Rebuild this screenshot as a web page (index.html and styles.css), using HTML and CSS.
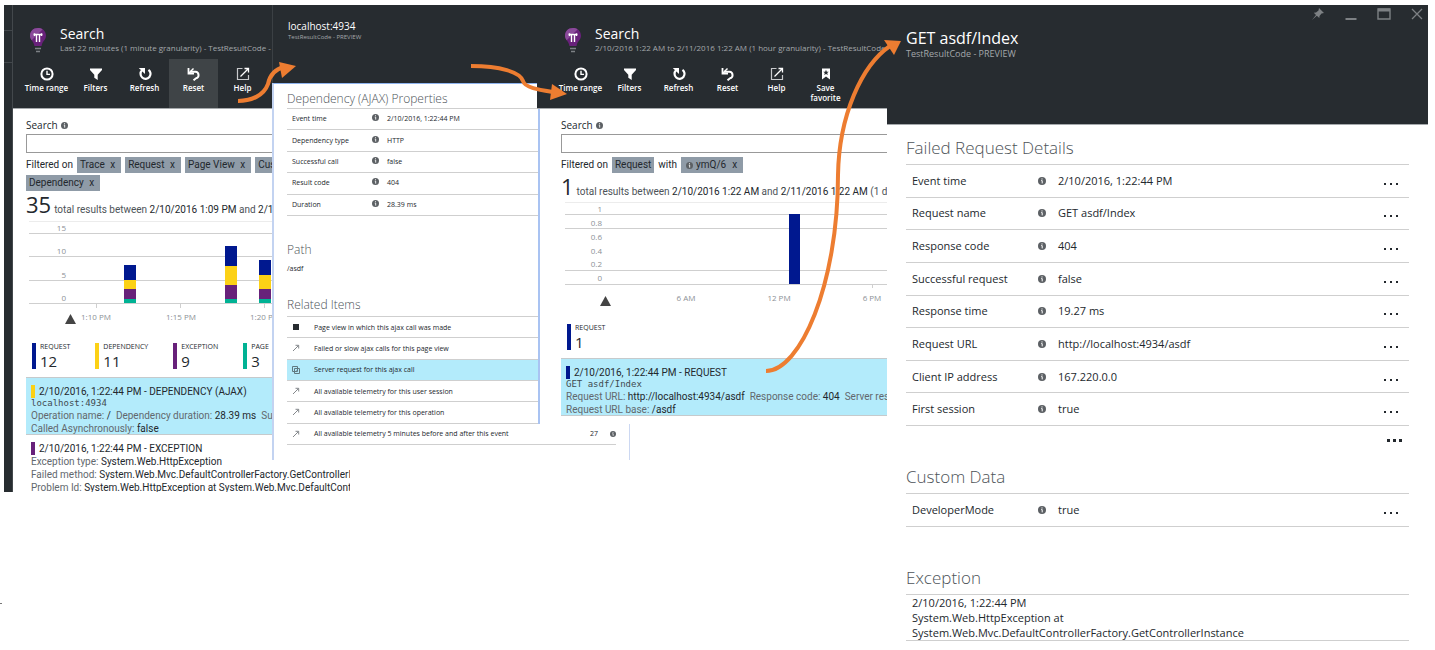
FILE: index.html
```html
<!DOCTYPE html>
<html lang="en">
<head>
<meta charset="utf-8">
<title>Application Insights - Search</title>
<link rel="stylesheet" href="styles.css">
</head>
<body>
<svg class="defs" width="0" height="0" aria-hidden="true">
  <symbol id="info" viewBox="0 0 8 8"><circle cx="4" cy="4" r="4" fill="#5c6064"/><path d="M4 1.4v1.1M3.2 3.6H4.2V6.4" stroke="#fff" stroke-width="1" fill="none"/></symbol>
  <symbol id="bulb" viewBox="0 0 18 28"><path d="M9 1C4 1 1 4.400 1 8.800C1 13 5 14.500 5.400 19H12.600C13 14.500 17 13 17 8.800C17 4.400 14 1 9 1Z" fill="#68217a"/><path d="M9 1C4 1 1 4.400 1 8.800C1 10.600 1.800 12 2.700 13.200L13.500 2.400C12.300 1.500 10.800 1 9 1Z" fill="#8a4a9a"/><path d="M4.500 7.500H13.500M7.500 7.500V15M10.500 7.500V15M5.500 6.300V9M12.500 6.300V9" stroke="#fff" stroke-width="1.400" fill="none"/><path d="M6 21.500H12M7 24.500H11" stroke="#7d8185" stroke-width="1.400"/></symbol>
  <symbol id="clock" viewBox="0 0 14 14"><circle cx="7" cy="7" r="5.600" fill="none" stroke="#fff" stroke-width="2"/><path d="M7 3.800V7.400H10" fill="none" stroke="#fff" stroke-width="1.400"/></symbol>
  <symbol id="filter" viewBox="0 0 14 14"><path d="M1 1.500H13V3L8.700 7.800V13L5.300 10.800V7.800L1 3Z" fill="#fff"/></symbol>
  <symbol id="refresh" viewBox="0 0 14 14"><path d="M10.500 2.800A5 5 0 1 1 4 3.300" fill="none" stroke="#fff" stroke-width="2.200"/><path d="M.8 1H7V7Z" fill="#fff"/></symbol>
  <symbol id="reset" viewBox="0 0 14 14"><path d="M3 4.800H8.500A3.300 3.300 0 0 1 9 11.300L6.500 13.300" fill="none" stroke="#fff" stroke-width="2"/><path d="M1.500 1V6.500H7" fill="none" stroke="#fff" stroke-width="1.800"/><path d="M2 6L6.500 1.500" stroke="#fff" stroke-width="1.400"/></symbol>
  <symbol id="help" viewBox="0 0 14 14"><path d="M6.500 1.500H1.500V12.500H12.500V8" fill="none" stroke="#c8cacc" stroke-width="1.200"/><path d="M4.500 9.500L12 2M8.500 1.500H12.500V5.500" fill="none" stroke="#fff" stroke-width="1.300"/></symbol>
  <symbol id="favorite" viewBox="0 0 14 14"><path d="M3 1.500H11V12.500L7 9.500L3 12.500Z" fill="#fff"/><path d="M7 2.800L7.800 4.700L9.800 4.800L8.200 6L8.800 8L7 6.900L5.200 8L5.800 6L4.200 4.800L6.200 4.700Z" fill="#272c30"/></symbol>
  <symbol id="out" viewBox="0 0 8 8"><path d="M1 7L6.500 1.500M3.500 1.300H6.700V4.500" fill="none" stroke="#84888c" stroke-width="1"/></symbol>
  <symbol id="square" viewBox="0 0 8 8"><rect x="1" y="1" width="6" height="6" fill="#272c30"/></symbol>
  <symbol id="copies" viewBox="0 0 8 8"><path d="M.5 .5H5.500V5.500H.5ZM2.500 2.500H7.500V7.500H2.500ZM4.500 4.500H5.500" fill="none" stroke="#5f7880" stroke-width="1"/></symbol>
</svg>

<main class="board">

  <section class="blade blade-results" aria-label="Search results">
    <div class="rail"><span class="rail-slot"></span><span class="rail-slot rail-mid"></span></div>
    <div class="pane">
      <header class="head">
        <div class="title-row">
          <svg class="bulb"><use href="#bulb"/></svg>
          <div><h1 class="title">Search</h1><p class="subtitle">Last 22 minutes (1 minute granularity) - TestResultCode -</p></div>
        </div>
        <nav class="tools">
          <button class="tool"><svg><use href="#clock"/></svg>Time range</button>
          <button class="tool"><svg><use href="#filter"/></svg>Filters</button>
          <button class="tool"><svg><use href="#refresh"/></svg>Refresh</button>
          <button class="tool tool-active"><svg><use href="#reset"/></svg>Reset</button>
          <button class="tool"><svg><use href="#help"/></svg>Help</button>
        </nav>
      </header>
      <div class="body">
        <label class="search-label" for="q1">Search <svg class="info"><use href="#info"/></svg></label>
        <input class="search-box" id="q1" type="text">
        <div class="filters">
          <span class="filter-line"><span>Filtered on</span><button class="tag">Trace <b>x</b></button><button class="tag">Request <b>x</b></button><button class="tag">Page View <b>x</b></button><button class="tag">Custom</button></span>
          <span class="filter-line"><button class="tag">Dependency <b>x</b></button></span>
        </div>
        <p class="total"><span class="count">35</span><span>total results between <em>2/10/2016 1:09 PM</em> and <em>2/10</em></span></p>
        <svg class="chart" viewBox="0 0 320 112" role="img" aria-label="Results over time">
          <path d="M3 3.500H320" class="grid-faint"/>
          <path d="M3 15.500H320M3 38.500H320M3 62.500H320M3 85.500H320M70.500 86V90M154.500 86V90M238.500 86V90" class="grid-line"/>
          <g class="axis axis-y"><text x="40" y="13">15</text><text x="40" y="36">10</text><text x="40" y="60">5</text><text x="40" y="83">0</text></g>
          <g class="c-request"><rect x="98" y="47" width="12" height="15"/><rect x="199" y="28" width="12" height="20"/><rect x="233" y="42" width="12" height="15"/></g>
          <g class="c-dependency"><rect x="98" y="62" width="12" height="9"/><rect x="199" y="48" width="12" height="19"/><rect x="233" y="57" width="12" height="14"/></g>
          <g class="c-exception"><rect x="98" y="71" width="12" height="10"/><rect x="199" y="67" width="12" height="14"/><rect x="233" y="71" width="12" height="10"/></g>
          <g class="c-page"><rect x="98" y="81" width="12" height="4"/><rect x="199" y="81" width="12" height="4"/><rect x="233" y="81" width="12" height="4"/></g>
          <path d="M39 106H50L44.500 96Z" fill="#444"/>
          <g class="axis axis-x"><text x="70" y="102">1:10 PM</text><text x="155" y="102">1:15 PM</text><text x="239" y="102">1:20 PM</text></g>
        </svg>
        <ul class="legend">
          <li class="b-request">REQUEST<strong>12</strong></li>
          <li class="b-dependency">DEPENDENCY<strong>11</strong></li>
          <li class="b-exception">EXCEPTION<strong>9</strong></li>
          <li class="b-page">PAGE<strong>3</strong></li>
        </ul>
        <article class="hit hit-selected">
          <h2 class="b-dependency">2/10/2016, 1:22:44 PM - DEPENDENCY (AJAX)</h2>
          <code>localhost:4934</code>
          <p>Operation name: <em>/</em>&nbsp; Dependency duration: <em>28.39 ms</em>&nbsp; Suc</p>
          <p>Called Asynchronously: <em>false</em></p>
        </article>
        <article class="hit">
          <h2 class="b-exception">2/10/2016, 1:22:44 PM - EXCEPTION</h2>
          <p>Exception type: <em>System.Web.HttpException</em></p>
          <p>Failed method: <em>System.Web.Mvc.DefaultControllerFactory.GetControllerIn</em></p>
          <p>Problem Id: <em>System.Web.HttpException at System.Web.Mvc.DefaultContro</em></p>
        </article>
      </div>
    </div>
  </section>

  <section class="blade blade-dependency" aria-label="Dependency details">
    <header class="head head-short">
      <h1 class="title title-small">localhost:4934</h1>
      <p class="subtitle subtitle-small">TestResultCode - PREVIEW</p>
    </header>
    <div class="sheet">
      <h2 class="section">Dependency (AJAX) Properties</h2>
      <table class="props props-small">
        <tr><th scope="row">Event time</th><td class="cell-info"><svg class="info"><use href="#info"/></svg></td><td>2/10/2016, 1:22:44 PM</td></tr>
        <tr><th scope="row">Dependency type</th><td class="cell-info"><svg class="info"><use href="#info"/></svg></td><td>HTTP</td></tr>
        <tr><th scope="row">Successful call</th><td class="cell-info"><svg class="info"><use href="#info"/></svg></td><td>false</td></tr>
        <tr><th scope="row">Result code</th><td class="cell-info"><svg class="info"><use href="#info"/></svg></td><td>404</td></tr>
        <tr><th scope="row">Duration</th><td class="cell-info"><svg class="info"><use href="#info"/></svg></td><td>28.39 ms</td></tr>
      </table>
      <h2 class="section section-path">Path</h2>
      <p class="path">/asdf</p>
      <h2 class="section section-related">Related Items</h2>
      <ul class="related">
        <li><svg><use href="#square"/></svg><a href="#">Page view in which this ajax call was made</a></li>
        <li><svg><use href="#out"/></svg><a href="#">Failed or slow ajax calls for this page view</a></li>
        <li class="current"><svg><use href="#copies"/></svg><a href="#">Server request for this ajax call</a></li>
        <li><svg><use href="#out"/></svg><a href="#">All available telemetry for this user session</a></li>
        <li><svg><use href="#out"/></svg><a href="#">All available telemetry for this operation</a></li>
        <li><svg><use href="#out"/></svg><a href="#">All available telemetry 5 minutes before and after this event</a><span class="amount">27</span><svg class="info"><use href="#info"/></svg></li>
      </ul>
    </div>
  </section>

  <section class="blade blade-request" aria-label="Request search">
    <header class="head">
      <div class="title-row">
        <svg class="bulb"><use href="#bulb"/></svg>
        <div><h1 class="title">Search</h1><p class="subtitle">2/10/2016 1:22 AM to 2/11/2016 1:22 AM (1 hour granularity) - TestResultCode</p></div>
      </div>
      <nav class="tools">
        <button class="tool"><svg><use href="#clock"/></svg>Time range</button>
        <button class="tool"><svg><use href="#filter"/></svg>Filters</button>
        <button class="tool"><svg><use href="#refresh"/></svg>Refresh</button>
        <button class="tool"><svg><use href="#reset"/></svg>Reset</button>
        <button class="tool"><svg><use href="#help"/></svg>Help</button>
        <button class="tool"><svg><use href="#favorite"/></svg>Save favorite</button>
      </nav>
    </header>
    <div class="body">
      <label class="search-label" for="q2">Search <svg class="info"><use href="#info"/></svg></label>
      <input class="search-box" id="q2" type="text">
      <div class="filters">
        <span class="filter-line"><span>Filtered on</span><button class="tag">Request</button><span>with</span><button class="tag tag-property"><svg class="info"><use href="#info"/></svg>ymQ/6 <b>x</b></button></span>
      </div>
      <p class="total"><span class="count">1</span><span>total results between <em>2/10/2016 1:22 AM</em> and <em>2/11/2016 1:22 AM</em> (1 day)</span></p>
      <svg class="chart chart-wide" viewBox="0 1 326 111" role="img" aria-label="Requests over time">
        <path d="M4 3.500H326" class="grid-faint"/>
        <path d="M4 15.500H326M4 29.500H326M4 71.500H326M4 85.500H326M311.500 86V89" class="grid-line"/>
        <g class="axis axis-y"><text x="41" y="13">1</text><text x="41" y="27">0.8</text><text x="41" y="41">0.6</text><text x="41" y="55">0.4</text><text x="41" y="68">0.2</text><text x="41" y="82">0</text></g>
        <rect class="c-request" x="228" y="15" width="11" height="70"/>
        <path d="M39 107H50L44.500 97Z" fill="#444"/>
        <g class="axis axis-x"><text x="125" y="102">6 AM</text><text x="218" y="102">12 PM</text><text x="311" y="102">6 PM</text></g>
      </svg>
      <ul class="legend">
        <li class="b-request">REQUEST<strong>1</strong></li>
      </ul>
      <article class="hit hit-selected">
        <h2 class="b-request">2/10/2016, 1:22:44 PM - REQUEST</h2>
        <code>GET asdf/Index</code>
        <p>Request URL: <em>http://localhost:4934/asdf</em>&nbsp; Response code: <em>404</em>&nbsp; Server respo</p>
        <p>Request URL base: <em>/asdf</em></p>
      </article>
    </div>
  </section>

  <section class="blade blade-details" aria-label="Request details">
    <header class="head head-tall">
      <div class="window-buttons">
        <button aria-label="Pin"><svg viewBox="0 0 14 14"><path d="M8 1L13 6L10.500 6.500L8.500 9L8.300 11L5.800 8.700L1 13L5 8L2.800 5.700L5 5.500L7.500 3.500Z" fill="#7d8184"/></svg></button>
        <button aria-label="Minimize"><svg viewBox="0 0 14 14"><path d="M1.500 12H12.500" stroke="#7d8184" stroke-width="2"/></svg></button>
        <button aria-label="Maximize"><svg viewBox="0 0 14 14"><path d="M1 2H13V12H1Z" fill="none" stroke="#7d8184" stroke-width="1.400"/><path d="M1 3H13" stroke="#7d8184" stroke-width="3"/></svg></button>
        <button aria-label="Close"><svg viewBox="0 0 14 14"><path d="M2 2L12 12M12 2L2 12" stroke="#7d8184" stroke-width="1.300"/></svg></button>
      </div>
      <h1 class="title title-large">GET asdf/Index</h1>
      <p class="subtitle subtitle-large">TestResultCode - PREVIEW</p>
    </header>
    <div class="details">
      <h2 class="section section-large">Failed Request Details</h2>
      <table class="props props-large">
        <tr><th scope="row">Event time</th><td class="cell-info"><svg class="info"><use href="#info"/></svg></td><td>2/10/2016, 1:22:44 PM</td><td class="cell-more"><button class="more" aria-label="More"><i></i><i></i><i></i></button></td></tr>
        <tr><th scope="row">Request name</th><td class="cell-info"><svg class="info"><use href="#info"/></svg></td><td>GET asdf/Index</td><td class="cell-more"><button class="more" aria-label="More"><i></i><i></i><i></i></button></td></tr>
        <tr><th scope="row">Response code</th><td class="cell-info"><svg class="info"><use href="#info"/></svg></td><td>404</td><td class="cell-more"><button class="more" aria-label="More"><i></i><i></i><i></i></button></td></tr>
        <tr><th scope="row">Successful request</th><td class="cell-info"><svg class="info"><use href="#info"/></svg></td><td>false</td><td class="cell-more"><button class="more" aria-label="More"><i></i><i></i><i></i></button></td></tr>
        <tr><th scope="row">Response time</th><td class="cell-info"><svg class="info"><use href="#info"/></svg></td><td>19.27 ms</td><td class="cell-more"><button class="more" aria-label="More"><i></i><i></i><i></i></button></td></tr>
        <tr><th scope="row">Request URL</th><td class="cell-info"><svg class="info"><use href="#info"/></svg></td><td>http://localhost:4934/asdf</td><td class="cell-more"><button class="more" aria-label="More"><i></i><i></i><i></i></button></td></tr>
        <tr><th scope="row">Client IP address</th><td class="cell-info"><svg class="info"><use href="#info"/></svg></td><td>167.220.0.0</td><td class="cell-more"><button class="more" aria-label="More"><i></i><i></i><i></i></button></td></tr>
        <tr><th scope="row">First session</th><td class="cell-info"><svg class="info"><use href="#info"/></svg></td><td>true</td><td class="cell-more"><button class="more" aria-label="More"><i></i><i></i><i></i></button></td></tr>
      </table>
      <button class="more more-all" aria-label="Show all"><i></i><i></i><i></i></button>
      <h2 class="section section-large section-custom">Custom Data</h2>
      <table class="props props-large props-one">
        <tr><th scope="row">DeveloperMode</th><td class="cell-info"><svg class="info"><use href="#info"/></svg></td><td>true</td><td class="cell-more"><button class="more" aria-label="More"><i></i><i></i><i></i></button></td></tr>
      </table>
      <h2 class="section section-large section-exception">Exception</h2>
      <p class="exception">2/10/2016, 1:22:44 PM<br>System.Web.HttpException at<br>System.Web.Mvc.DefaultControllerFactory.GetControllerInstance</p>
    </div>
  </section>
</main>

<svg class="arrows" viewBox="0 0 1435 650" preserveAspectRatio="none" aria-hidden="true">
  <path class="arrow-line" d="M238 101C252 101 264 95 268 84C270 74 276 69 284 67"/>
  <path class="arrow-head" d="M296 66L279 62L282 78Z"/>
  <path class="arrow-line" d="M471 66C500 66 520 72 523 81C525 88 540 90 553 92"/>
  <path class="arrow-head" d="M567 94L552 84L550 100Z"/>
  <path class="arrow-line" d="M766 371C800 371 838 285 838 175C839 115 862 65 890 46"/>
  <path class="arrow-head" d="M901 41L884 40L894 55Z"/>
  <path d="M0 603.500H2" stroke="#777"/>
</svg>
</body>
</html>
```
FILE: styles.css
```css
* { box-sizing: border-box; }
body { margin: 0; background: #fff; color: #23282d; font: 10px/13px "Open Sans", "Noto Sans", sans-serif; position: relative; }
h1, h2, p, ul { margin: 0; padding: 0; font-weight: 400; }
ul { list-style: none; }
em { font-style: normal; color: #23282d; }
button { font: inherit; color: inherit; border: 0; background: none; padding: 0; }
svg { display: block; }
.defs { position: absolute; }

/* Blades overlap from left to right */
.board { display: grid; grid-template-columns: 268fr 265fr 350fr 541fr; align-items: start; padding: 5px 7px 8px 4px; }
.blade { grid-row: 1; min-width: 0; overflow: hidden; background: #fff; }
.blade-results { grid-column: 1 / 3; margin-right: 187px; display: flex; height: 487px; }
.blade-dependency { grid-column: 2 / 4; margin-right: 257px; z-index: 1; height: 455px; }
.blade-request { grid-column: 3; z-index: 2; height: 419px; }
.blade-details { grid-column: 4; z-index: 3; }

.rail { flex: 0 0 9px; background: #272c30; border-right: 1px solid #43484c; }
.rail-slot { display: block; height: 26px; border-bottom: 1px solid #43484c; }
.rail-mid { height: 32px; }
.pane { flex: 1; min-width: 0; overflow: hidden; }

.head { background: #272c30; color: #fff; height: 104px; border-bottom: 1px solid #a5a9ac; }
.title-row { display: flex; gap: 13px; height: 54px; padding: 20px 0 0 16px; white-space: nowrap; }
.bulb { width: 18px; height: 28px; margin-top: 2px; flex: none; }
.title { font-size: 14px; line-height: 18px; }
.subtitle { font-size: 8px; line-height: 10px; color: #a4a8ab; }
.tools { display: flex; padding-left: 9px; height: 49px; }
.tool { width: 49px; height: 49px; font-size: 8px; line-height: 10px; font-weight: 600; display: flex; flex-direction: column; align-items: center; gap: 2px; padding-top: 8px; }
.tool svg { width: 14px; height: 14px; flex: none; }
.tool-active { background: #3f4447; }

.body { padding: 9px 0 0 13px; }
.info { width: 7px; height: 7px; display: inline-block; flex: none; }
.search-label { display: flex; align-items: center; gap: 3px; height: 14px; }
.search-box { display: block; width: 100%; height: 19px; margin-top: 2px; border: 1px solid #999; border-right: 0; padding: 0 4px; font: inherit; }
.filters { display: flex; flex-direction: column; gap: 2px; margin-top: 4px; font-family: Roboto, "Open Sans", sans-serif; }
.filter-line { display: flex; gap: 4px; line-height: 16px; white-space: nowrap; }
.tag { background: #8f9ba7; padding: 0 3px; height: 16px; line-height: 16px; }
.tag b { font-weight: 400; padding: 0 3px; }
.tag-property { display: flex; align-items: center; gap: 3px; padding-left: 5px; }
.total { display: flex; align-items: baseline; gap: 3px; white-space: nowrap; color: #4d5358; height: 27px; line-height: 26px; font-family: Roboto, "Open Sans", sans-serif; }
.count { font-family: "Open Sans", "Noto Sans", sans-serif; font-size: 22px; color: #23282d; }
.chart { width: 320px; height: 112px; }
.grid-line { stroke: #cfcfcf; fill: none; }
.grid-faint { stroke: #ececec; fill: none; }
.axis { fill: #8c9196; font-size: 8px; }
.axis-y { text-anchor: end; }
.axis-x { text-anchor: middle; }
.c-request { fill: #00188f; }
.c-dependency { fill: #fcd116; }
.c-exception { fill: #68217a; }
.c-page { fill: #00b294; }
.b-request { border-color: #00188f; }
.b-dependency { border-color: #fcd116; }
.b-exception { border-color: #68217a; }
.b-page { border-color: #00b294; }
.legend { display: flex; gap: 25px; padding: 13px 0 8px 6px; white-space: nowrap; }
.legend li { border-left-width: 4px; border-left-style: solid; padding-left: 4px; font-size: 7px; line-height: 8px; height: 26px; }
.legend strong { display: block; font-size: 15px; line-height: 20px; font-weight: 400; }
.hit { padding: 7px 0 0 5px; color: #62686d; white-space: nowrap; height: 58px; font-family: Roboto, "Open Sans", sans-serif; }
.hit-selected { background: #b3ebfb; border: solid #c6cacc; border-width: 1px 0; }
.hit h2 { font-size: 10px; line-height: 13px; color: #23282d; border-left-width: 4px; border-left-style: solid; padding-left: 4px; }
.hit code { display: block; font: 9px/11px "DejaVu Sans Mono", monospace; color: #3f4a50; }

.head-short { height: 78px; border: 0; border-left: 1px solid #3b4044; padding: 14px 0 0 15px; }
.title-small { font-size: 10px; line-height: 14px; }
.subtitle-small { font-size: 6px; line-height: 8px; }
.sheet { height: 377px; border-top: 1px solid #8fb4ee; border-left: 2px solid #c3d3f1; border-right: 1px solid #ccd8f2; padding: 6px 13px 0 13px; font-size: 7px; }
.section { font-size: 12px; line-height: 18px; font-weight: 300; color: #4d5358; }
.props { border-collapse: collapse; width: 100%; border-top: 1px solid #cfcfcf; }
.props tr { border-bottom: 1px solid #cfcfcf; }
.props th { font-weight: 400; text-align: left; }
.props td, .props th { padding: 0; line-height: 12px; }
.props-small { height: 108px; }
.props-small th { width: 85px; padding-left: 5px; }
.props-small .cell-info { width: 15px; }
.section-path { margin-top: 25px; }
.path { margin: 4px 0 21px; line-height: 12px; }
.related { display: grid; height: 129px; border-top: 1px solid #cfcfcf; margin-top: 2px; }
.related li { display: flex; align-items: center; border-bottom: 1px solid #cfcfcf; padding-left: 5px; }
.related a { color: inherit; text-decoration: none; margin-left: 14px; white-space: nowrap; }
.related svg { width: 8px; height: 8px; }
.related .current { background: #b3ebfb; }
.related .amount { margin-left: auto; margin-right: 12px; }
.related .info { width: 6px; height: 6px; }

.blade-request { background: none; }
.blade-request .head { padding-left: 11px; }
.blade-request .body { height: 315px; margin-left: 1px; padding-left: 21px; border-left: 2px solid #a9c3f2; background: #fff; }
.blade-request .tools { padding-left: 8px; }
.chart-wide { width: 326px; height: 111px; }

.head-tall { height: 120px; position: relative; padding: 22px 19px 0; }
.title-large { font-size: 16px; line-height: 22px; }
.subtitle-large { font-size: 9px; }
.window-buttons { position: absolute; top: 2px; right: 4px; display: flex; gap: 19px; }
.window-buttons svg { width: 14px; height: 14px; }
.details { padding: 12px 19px 0; }
.section-large { font-size: 17px; line-height: 22px; }
.props-large { height: 262px; margin-top: 5px; font-size: 11px; }
.props-large th { width: 132px; padding-left: 6px; }
.props-large .cell-info { width: 20px; }
.props-large .info { width: 8px; height: 8px; }
.props-one { height: 34px; }
.cell-more { width: 25px; }
.more { display: flex; gap: 4px; margin-top: 6px; }
.more i { width: 2px; height: 2px; background: #23282d; }
.more-all { margin: 13px 7px 0 auto; gap: 3px; }
.more-all i { width: 3px; height: 3px; }
.section-custom { margin-top: 24px; }
.section-exception { margin-top: 40px; }
.exception { font-size: 11px; line-height: 15px; border: solid #cfcfcf; border-width: 1px 0; margin-top: 5px; padding-left: 6px; }

/* Flow arrows drawn across the blades */
.arrows { position: absolute; top: 0; left: 0; z-index: 5; width: 100%; height: 650px; pointer-events: none; }
.arrow-line { fill: none; stroke: #ed7d31; stroke-width: 4; }
.arrow-head { fill: #ed7d31; }
```
